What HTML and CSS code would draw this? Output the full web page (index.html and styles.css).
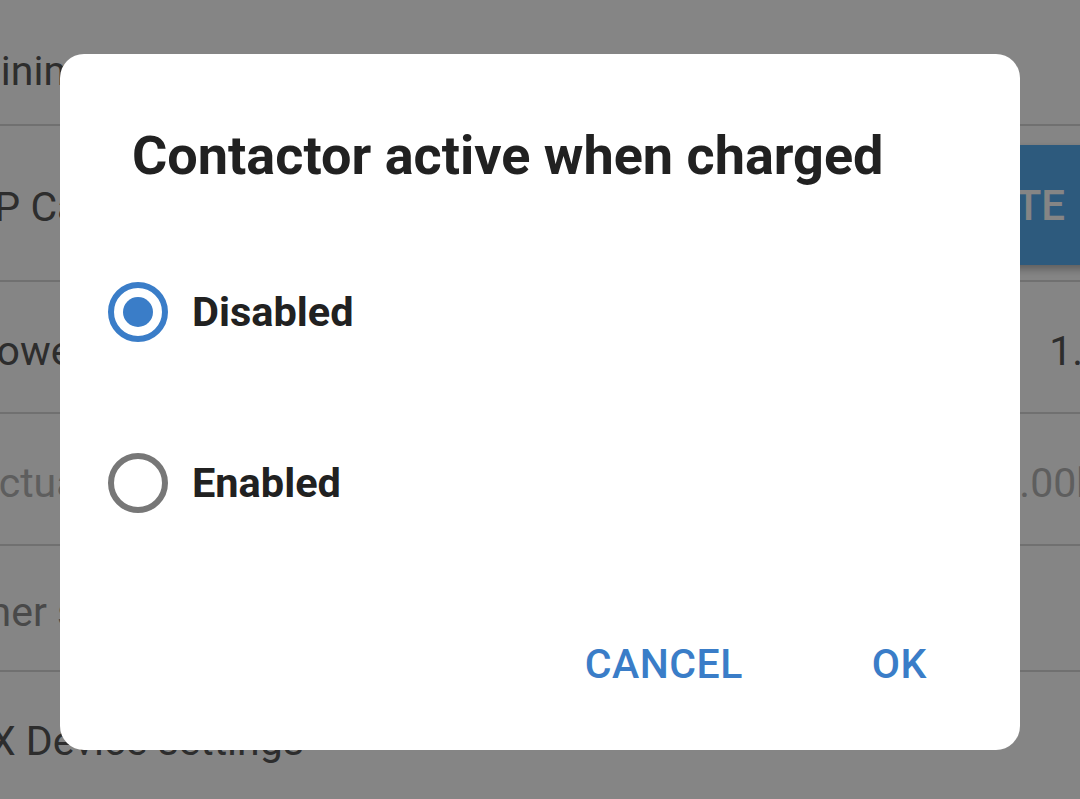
FILE: index.html
```html
<!DOCTYPE html>
<html lang="en">
<head>
<meta charset="utf-8">
<title>Contactor active when charged</title>
<link rel="stylesheet" href="styles.css">
</head>
<body>
<div class="page">
  <div class="list">
    <div class="row row-first"><span class="label lbl-min">Minimum charging current</span></div>
    <div class="row row-btn"><span class="label lbl-cal">SP Calibration</span><button class="action">CALIBRATE</button></div>
    <div class="row"><span class="label lbl-pow">Power limit</span><span class="value">1.00 A</span></div>
    <div class="row row-dim"><span class="label lbl-act">Actual voltage</span><span class="value val-act">0.00kWh</span></div>
    <div class="row row-mid"><span class="label lbl-oth">Other settings</span></div>
    <div class="row"><span class="label lbl-gx">GX Device settings</span></div>
  </div>
</div>
<div class="scrim">
  <div class="dialog">
    <h1 class="title">Contactor active when charged</h1>
    <div class="options">
      <label class="option">
        <span class="radio radio-on"><span class="dot"></span></span>
        <span class="opt-text">Disabled</span>
      </label>
      <label class="option">
        <span class="radio"></span>
        <span class="opt-text">Enabled</span>
      </label>
    </div>
    <div class="actions">
      <button class="btn">CANCEL</button>
      <button class="btn">OK</button>
    </div>
  </div>
</div>
</body>
</html>
```
FILE: styles.css
```css
html, body {
  margin: 0;
  padding: 0;
}
body {
  width: 1080px;
  height: 799px;
  overflow: hidden;
  background: #ffffff;
  font-family: Roboto, "Liberation Sans", sans-serif;
}
.page {
  width: 1080px;
  height: 799px;
  overflow: hidden;
}
.list {
  width: 1166px;
}
.row {
  display: flex;
  align-items: center;
  justify-content: space-between;
  height: 130px;
  border-bottom: 2px solid #d7d7d7;
  font-size: 41px;
  color: #565656;
}
.row-first {
  height: 126px;
  align-items: flex-start;
  box-sizing: border-box;
  padding-top: 47px;
}
.row-first .label {
  padding-top: 0;
}
.row-btn {
  height: 154px;
}
.row-mid {
  height: 124px;
  color: #8c8c8c;
}
.row-dim {
  color: #b5b5b5;
}
.label {
  line-height: 48px;
  padding-top: 8px;
  white-space: nowrap;
}
.value {
  line-height: 48px;
  padding-top: 8px;
  white-space: nowrap;
}
.lbl-min { margin-left: -35px; }
.lbl-cal { margin-left: -30px; }
.lbl-pow { margin-left: -29px; }
.lbl-act { margin-left: -28px; }
.lbl-oth { margin-left: -53px; }
.lbl-gx { margin-left: -38px; }
.val-act { margin-right: 10px; }
.action {
  font-family: Roboto, "Liberation Sans", sans-serif;
  font-size: 42px;
  font-weight: 500;
  color: #ffffff;
  background: #57adf0;
  border: none;
  height: 120px;
  margin-top: 4px;
  padding: 0 101px 0 40px;
  box-shadow: 0 4px 8px rgba(0, 0, 0, 0.3);
}
.scrim {
  position: fixed;
  inset: 0;
  background: rgba(0, 0, 0, 0.48);
  display: flex;
  justify-content: center;
  align-items: flex-start;
  padding-top: 54px;
}
.dialog {
  width: 960px;
  height: 696px;
  background: #ffffff;
  border-radius: 24px;
  box-sizing: border-box;
  padding: 70px 0 0 0;
  display: flex;
  flex-direction: column;
}
.title {
  margin: 0;
  padding-left: 72px;
  font-size: 54px;
  line-height: 64px;
  font-weight: 700;
  color: #212121;
}
.options {
  margin-top: 38px;
  padding-left: 48px;
  display: flex;
  flex-direction: column;
}
.option {
  height: 171px;
  display: flex;
  align-items: center;
  gap: 24px;
}
.radio {
  width: 60px;
  height: 60px;
  box-sizing: border-box;
  border-radius: 50%;
  border: 6px solid #777777;
  display: flex;
  align-items: center;
  justify-content: center;
}
.radio-on {
  border-color: #3a7dc8;
}
.dot {
  width: 30px;
  height: 30px;
  border-radius: 50%;
  background: #3a7dc8;
}
.opt-text {
  font-size: 41.5px;
  font-weight: 700;
  color: #212121;
  line-height: 48px;
}
.actions {
  display: flex;
  justify-content: flex-end;
  margin-top: auto;
  padding: 0 93px 62px 0;
  gap: 129px;
}
.btn {
  font-family: Roboto, "Liberation Sans", sans-serif;
  font-size: 41px;
  font-weight: 500;
  line-height: 48px;
  letter-spacing: 0.5px;
  color: #3a7dc8;
  background: none;
  border: none;
  padding: 0;
}
```
